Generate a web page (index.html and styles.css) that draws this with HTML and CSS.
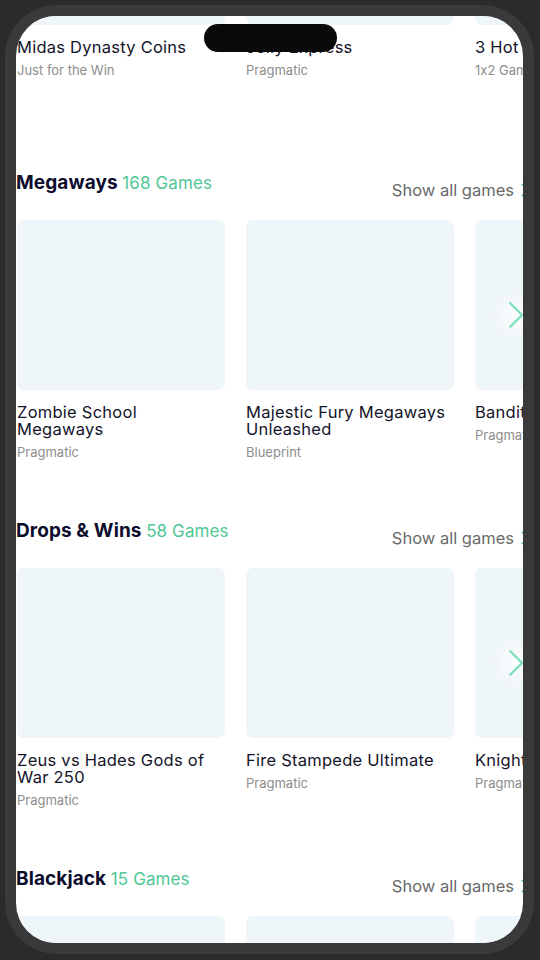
FILE: index.html
```html
<!DOCTYPE html>
<html lang="en">
<head>
    <meta charset="UTF-8">
    <meta name="viewport" content="width=device-width, initial-scale=1.0">
    <title>Casino Lobby</title>
    <link rel="stylesheet" href="styles.css">
</head>
<body>
    <div class="phone">
        <div class="island"></div>
        <div class="screen">
            <div class="feed">
                <!-- previous row, scrolled mostly out of view -->
                <section class="category category--top">
                    <div class="games">
                        <div class="game">
                            <div class="thumb"></div>
                            <h3 class="game-name">Midas Dynasty Coins</h3>
                            <p class="game-provider">Just for the Win</p>
                        </div>
                        <div class="game">
                            <div class="thumb"></div>
                            <h3 class="game-name">Jolly Express</h3>
                            <p class="game-provider">Pragmatic</p>
                        </div>
                        <div class="game">
                            <div class="thumb"></div>
                            <h3 class="game-name">3 Hot Chillies</h3>
                            <p class="game-provider">1x2 Gaming</p>
                        </div>
                    </div>
                </section>

                <section class="category">
                    <div class="cat-head">
                        <h2 class="cat-title">Megaways <span class="cat-count">168 Games</span></h2>
                        <a class="show-all" href="#">Show all games
                            <svg width="8" height="14" viewBox="0 0 8 14"><path d="M1 1l6 6-6 6" fill="none" stroke="#4fc795" stroke-width="1.6"/></svg>
                        </a>
                    </div>
                    <div class="games">
                        <div class="game">
                            <div class="thumb"></div>
                            <h3 class="game-name">Zombie School Megaways</h3>
                            <p class="game-provider">Pragmatic</p>
                        </div>
                        <div class="game">
                            <div class="thumb"></div>
                            <h3 class="game-name">Majestic Fury Megaways Unleashed</h3>
                            <p class="game-provider">Blueprint</p>
                        </div>
                        <div class="game">
                            <div class="thumb"></div>
                            <h3 class="game-name">Bandits Megaways</h3>
                            <p class="game-provider">Pragmatic</p>
                        </div>
                        <button class="next" aria-label="Next">
                            <svg width="16" height="28" viewBox="0 0 16 28"><path d="M1.5 1.5l12.5 12.5-12.5 12.5" fill="none" stroke="#7fe0b9" stroke-width="2.4"/></svg>
                        </button>
                    </div>
                </section>

                <section class="category">
                    <div class="cat-head">
                        <h2 class="cat-title">Drops &amp; Wins <span class="cat-count">58 Games</span></h2>
                        <a class="show-all" href="#">Show all games
                            <svg width="8" height="14" viewBox="0 0 8 14"><path d="M1 1l6 6-6 6" fill="none" stroke="#4fc795" stroke-width="1.6"/></svg>
                        </a>
                    </div>
                    <div class="games">
                        <div class="game">
                            <div class="thumb"></div>
                            <h3 class="game-name">Zeus vs Hades Gods of War 250</h3>
                            <p class="game-provider">Pragmatic</p>
                        </div>
                        <div class="game">
                            <div class="thumb"></div>
                            <h3 class="game-name">Fire Stampede Ultimate</h3>
                            <p class="game-provider">Pragmatic</p>
                        </div>
                        <div class="game">
                            <div class="thumb"></div>
                            <h3 class="game-name">Knight Hot Spotz</h3>
                            <p class="game-provider">Pragmatic</p>
                        </div>
                        <button class="next" aria-label="Next">
                            <svg width="16" height="28" viewBox="0 0 16 28"><path d="M1.5 1.5l12.5 12.5-12.5 12.5" fill="none" stroke="#7fe0b9" stroke-width="2.4"/></svg>
                        </button>
                    </div>
                </section>

                <section class="category">
                    <div class="cat-head">
                        <h2 class="cat-title">Blackjack <span class="cat-count">15 Games</span></h2>
                        <a class="show-all" href="#">Show all games
                            <svg width="8" height="14" viewBox="0 0 8 14"><path d="M1 1l6 6-6 6" fill="none" stroke="#4fc795" stroke-width="1.6"/></svg>
                        </a>
                    </div>
                    <div class="games">
                        <div class="game">
                            <div class="thumb"></div>
                            <h3 class="game-name">Blackjack</h3>
                            <p class="game-provider">Evolution</p>
                        </div>
                        <div class="game">
                            <div class="thumb"></div>
                            <h3 class="game-name">Speed Blackjack</h3>
                            <p class="game-provider">Evolution</p>
                        </div>
                        <div class="game">
                            <div class="thumb"></div>
                            <h3 class="game-name">Blackjack VIP</h3>
                            <p class="game-provider">Evolution</p>
                        </div>
                    </div>
                </section>
            </div>
        </div>
    </div>
</body>
</html>
```

FILE: styles.css
```css
body {
    margin: 0;
    padding: 0;
    background-color: #2b2b2b;
    font-family: "Inter", "Liberation Sans", sans-serif;
    font-feature-settings: "calt" 0;
    height: 960px;
    overflow: hidden;
}
.phone {
    position: relative;
    margin: 5px;
    width: 507px;
    height: 927px;
    border: 11px solid #3a3a3b;
    border-radius: 52px;
    background-color: #2b2b2b;
}
.island {
    position: absolute;
    left: 188px;
    top: 8px;
    width: 133px;
    height: 28px;
    border-radius: 14px;
    background-color: #0a0a0a;
    z-index: 2;
}
.screen {
    width: 507px;
    height: 927px;
    border-radius: 40px;
    background-color: #fff;
    overflow: hidden;
}
.feed {
    margin-top: -161px;
}
.category {
    padding-top: 59px;
}
.category--top {
    padding-top: 0;
    margin-bottom: 34px;
}
.cat-head {
    display: flex;
    justify-content: space-between;
    align-items: flex-start;
    margin-right: -6px;
    margin-bottom: 18px;
}
.cat-title {
    margin: 0;
    font-size: 19px;
    line-height: 24px;
    font-weight: 700;
    color: #0d0d2e;
    letter-spacing: 0.1px;
}
.cat-count {
    font-size: 17px;
    font-weight: 400;
    color: #4fc795;
    letter-spacing: 0.1px;
}
.show-all {
    display: flex;
    align-items: center;
    gap: 7px;
    margin-top: 7px;
    font-size: 16.5px;
    line-height: 24px;
    color: #6a6a6a;
    text-decoration: none;
}
.games {
    position: relative;
    display: flex;
    gap: 21px;
    padding-left: 1px;
}
.game {
    flex: 0 0 208px;
}
.thumb {
    height: 170px;
    border-radius: 7px;
    background-color: #eff6f9;
}
.game-name {
    margin: 14px 0 0;
    font-size: 16.5px;
    line-height: 17px;
    font-weight: 400;
    letter-spacing: 0.25px;
    color: #14142a;
}
.game-provider {
    margin: 6px 0 0;
    font-size: 13px;
    line-height: 16px;
    color: #8d8d8d;
}
.next {
    position: absolute;
    left: 475px;
    top: 70px;
    width: 50px;
    height: 50px;
    padding: 0;
    border: none;
    border-radius: 50%;
    background: radial-gradient(circle, rgba(255, 255, 255, 0.8) 0%, rgba(255, 255, 255, 0) 70%);
    display: flex;
    align-items: center;
    justify-content: center;
    cursor: pointer;
}
```
